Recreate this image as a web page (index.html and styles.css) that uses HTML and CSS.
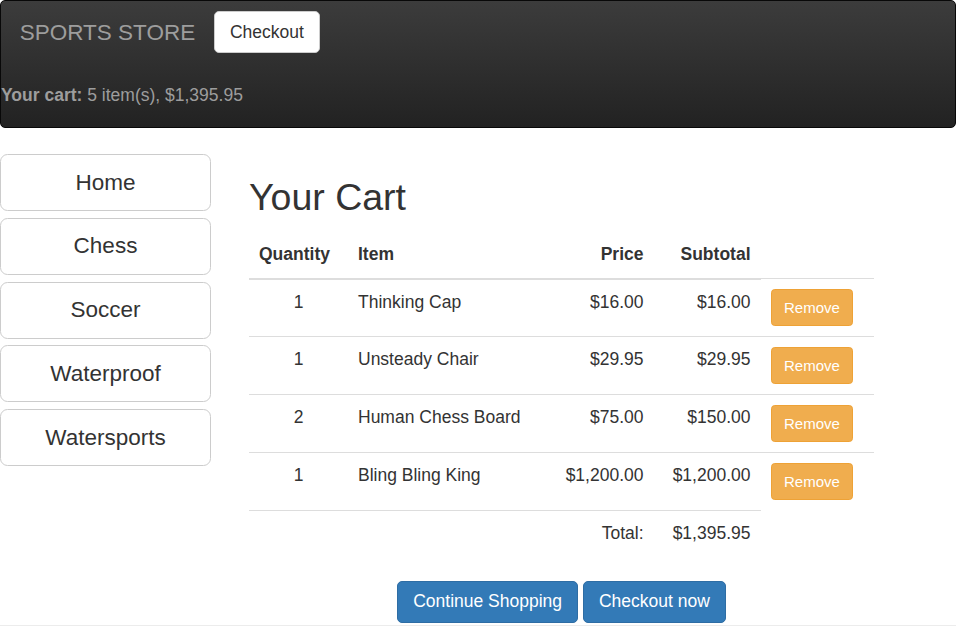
FILE: index.html
```html
<!DOCTYPE html>
<html>
<head>
<meta charset="utf-8">
<title>Sports Store</title>
<link rel="stylesheet" href="styles.css">
</head>
<body>
<div class="navbar">
  <div class="navbar-header">
    <span class="brand">SPORTS STORE</span>
    <button class="btn btn-default nav-btn">Checkout</button>
  </div>
  <div class="navbar-text"><b>Your cart:</b> 5 item(s), $1,395.95</div>
</div>
<div class="main">
  <div class="side">
    <button class="btn btn-default btn-lg">Home</button>
    <button class="btn btn-default btn-lg">Chess</button>
    <button class="btn btn-default btn-lg">Soccer</button>
    <button class="btn btn-default btn-lg">Waterproof</button>
    <button class="btn btn-default btn-lg">Watersports</button>
  </div>
  <div class="content">
    <h2 class="title">Your Cart</h2>
    <table class="cart">
      <thead>
        <tr>
          <th class="c-qty">Quantity</th>
          <th class="c-item">Item</th>
          <th class="c-price right">Price</th>
          <th class="c-sub right">Subtotal</th>
        </tr>
      </thead>
      <tbody>
        <tr>
          <td class="center">1</td>
          <td>Thinking Cap</td>
          <td class="right">$16.00</td>
          <td class="right">$16.00</td>
          <td><button class="btn btn-warning btn-sm">Remove</button></td>
        </tr>
        <tr>
          <td class="center">1</td>
          <td>Unsteady Chair</td>
          <td class="right">$29.95</td>
          <td class="right">$29.95</td>
          <td><button class="btn btn-warning btn-sm">Remove</button></td>
        </tr>
        <tr>
          <td class="center">2</td>
          <td>Human Chess Board</td>
          <td class="right">$75.00</td>
          <td class="right">$150.00</td>
          <td><button class="btn btn-warning btn-sm">Remove</button></td>
        </tr>
        <tr>
          <td class="center">1</td>
          <td>Bling Bling King</td>
          <td class="right">$1,200.00</td>
          <td class="right">$1,200.00</td>
          <td><button class="btn btn-warning btn-sm">Remove</button></td>
        </tr>
      </tbody>
      <tfoot>
        <tr>
          <td colspan="3" class="right">Total:</td>
          <td class="right">$1,395.95</td>
        </tr>
      </tfoot>
    </table>
    <div class="actions">
      <button class="btn btn-primary">Continue Shopping</button>
      <button class="btn btn-primary">Checkout now</button>
    </div>
  </div>
</div>
<div class="page-edge"></div>
</body>
</html>
```
FILE: styles.css
```css
html, body {
  margin: 0;
  padding: 0;
}
body {
  font-family: "Liberation Sans", Arial, Helvetica, sans-serif;
  font-size: 17.5px;
  line-height: 25px;
  color: #333;
  background: #fff;
}
.navbar {
  border: 1px solid #080808;
  border-radius: 5px;
  background: linear-gradient(to bottom, #3c3c3c 0%, #222 100%);
  margin-bottom: 25px;
}
.navbar-header {
  display: flex;
  align-items: flex-start;
  height: 63px;
}
.brand {
  padding: 18.75px;
  font-size: 22.5px;
  line-height: 25px;
  color: #9d9d9d;
}
.navbar-text {
  margin: 18.75px 0 19.25px;
  color: #9d9d9d;
}
.navbar-text b {
  font-weight: bold;
}
.btn {
  display: inline-block;
  font-family: inherit;
  font-size: 17.5px;
  line-height: 25px;
  padding: 7.5px 15px;
  border: 1px solid transparent;
  border-radius: 5px;
  cursor: pointer;
  text-align: center;
  white-space: nowrap;
  margin: 0;
  box-sizing: border-box;
}
.btn-default {
  background: #fff;
  border-color: #ccc;
  color: #333;
}
.nav-btn {
  margin-top: 10px;
}
.main {
  display: flex;
  align-items: flex-start;
  gap: 38px;
}
.side {
  width: 211px;
  flex: none;
  padding-top: 1px;
  display: flex;
  flex-direction: column;
  gap: 6.75px;
}
.btn-lg {
  font-size: 22.5px;
  line-height: 30px;
  padding: 12.5px 20px;
  border-radius: 7.5px;
  width: 100%;
}
.content {
  width: 625px;
  flex: none;
}
.title {
  margin: 24px 0 13.5px;
  font-size: 37.5px;
  line-height: 41.25px;
  font-weight: 500;
  color: #333;
}
.cart {
  width: 625px;
  border-collapse: collapse;
  border-spacing: 0;
  table-layout: fixed;
  margin-bottom: 25px;
}
.cart th,
.cart td {
  padding: 10px;
  line-height: 25px;
  text-align: left;
  box-sizing: border-box;
}
.cart th {
  font-weight: bold;
  vertical-align: bottom;
  border-bottom: 2px solid #ddd;
  padding-bottom: 11px;
}
.cart td {
  vertical-align: top;
  border-top: 1px solid #ddd;
}
.c-qty { width: 99px; }
.c-item { width: 198.5px; }
.c-price { width: 107px; }
.c-sub { width: 107px; }
.cart .right { text-align: right; }
.cart .center { text-align: center; }
.btn-warning {
  background: #f0ad4e;
  border-color: #eea236;
  color: #fff;
}
.btn-sm {
  font-size: 15px;
  line-height: 22.5px;
  padding: 6.25px 12.5px;
  border-radius: 3.75px;
}
.actions {
  text-align: center;
}
.btn-primary {
  background: #337ab7;
  border-color: #2e6da4;
  color: #fff;
}
.page-edge {
  margin-top: 2px;
  border-top: 1px solid #ececec;
}
```
